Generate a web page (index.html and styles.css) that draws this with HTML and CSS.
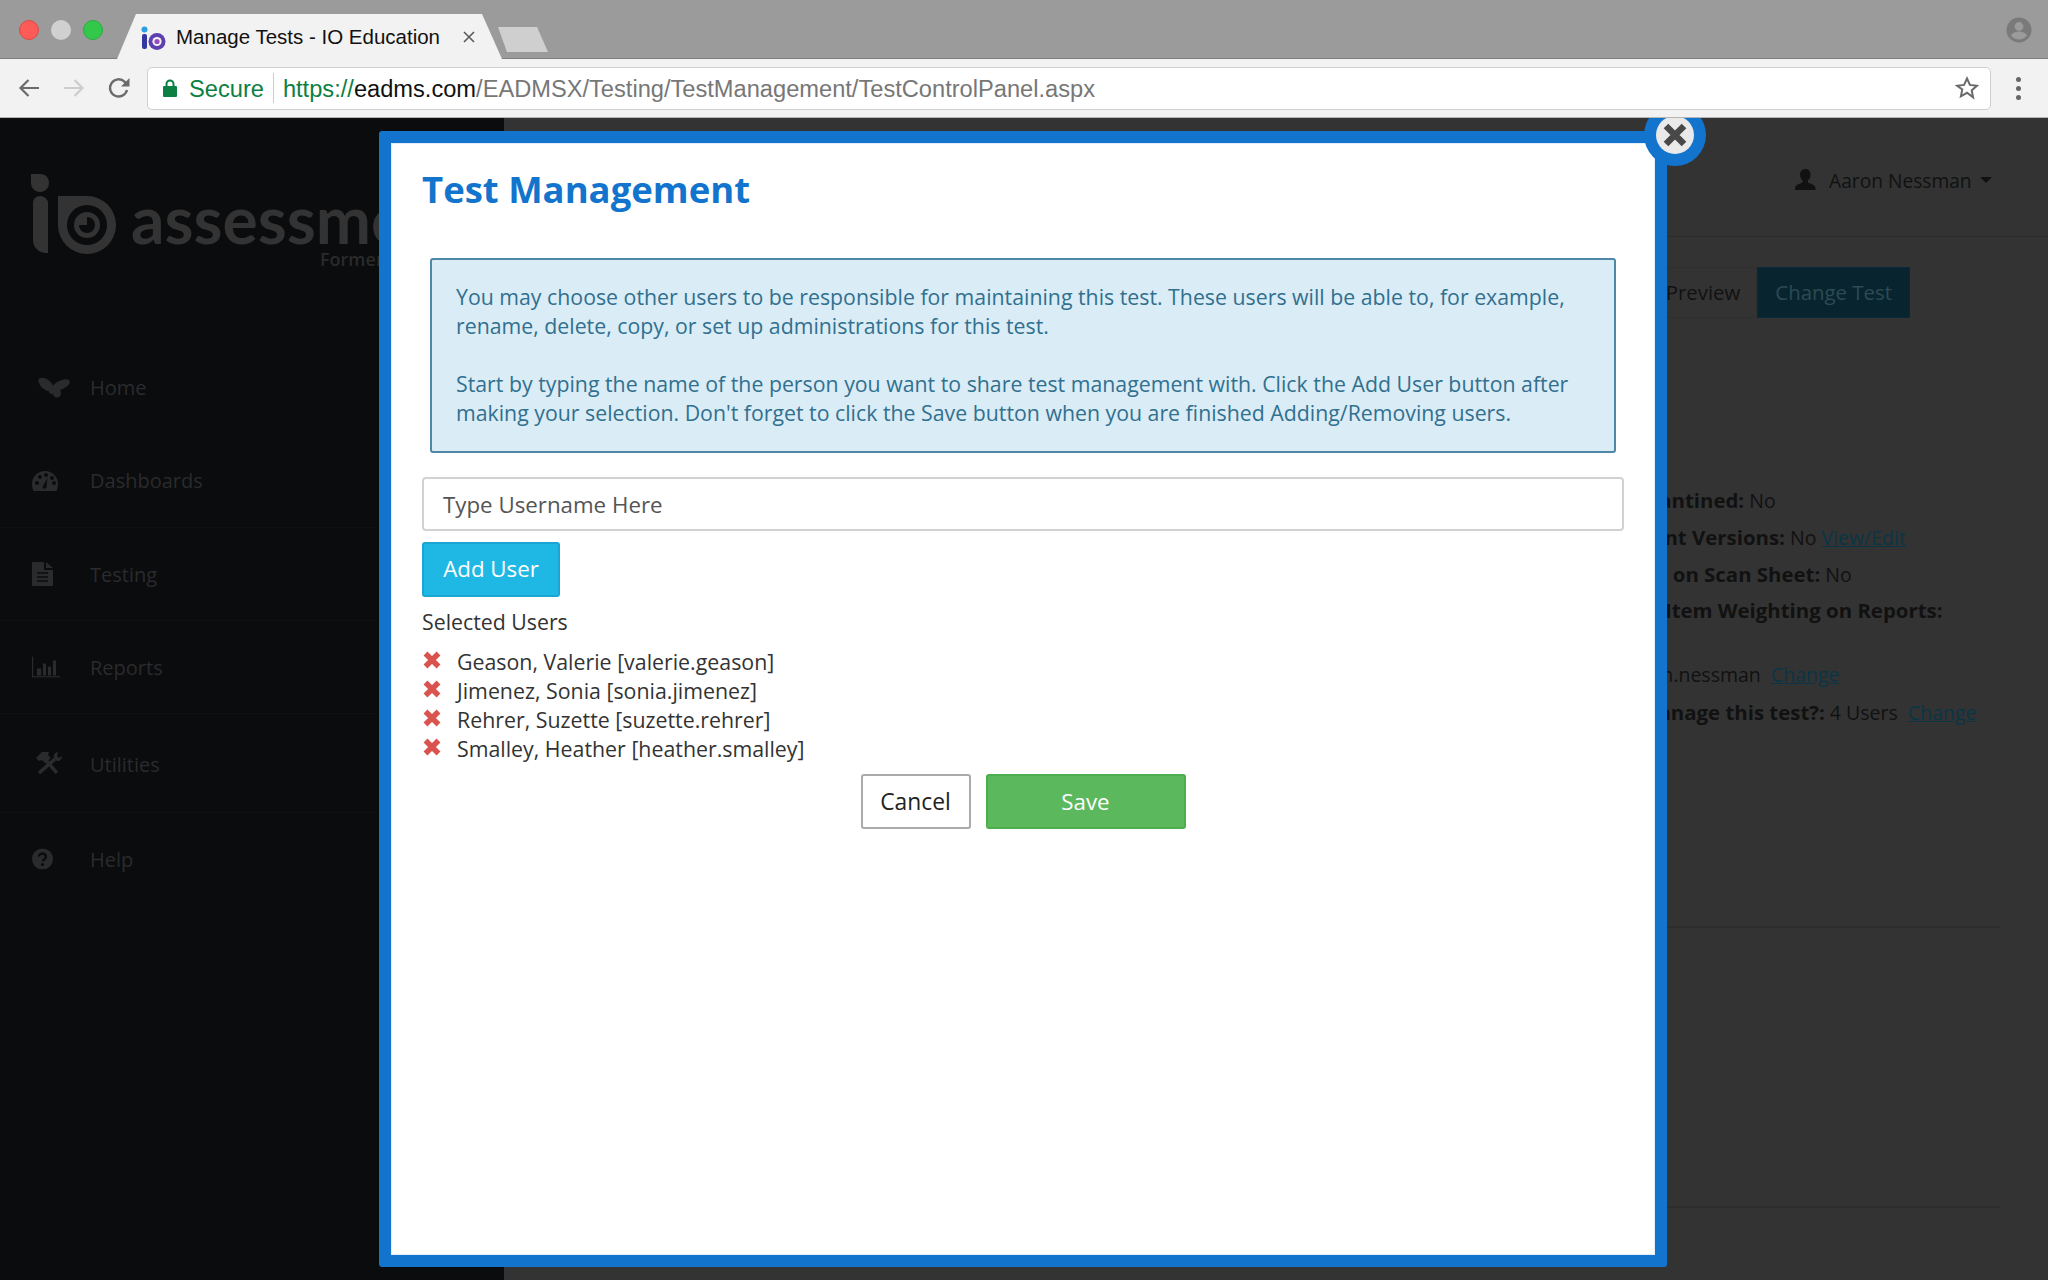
FILE: index.html
```html
<!DOCTYPE html>
<html lang="en">
<head>
<meta charset="utf-8">
<title>Manage Tests - IO Education</title>
<link rel="stylesheet" href="styles.css">
</head>
<body>
<div class="window">
  <header class="tabstrip">
    <div class="lights">
      <span class="light light-red"></span>
      <span class="light light-grey"></span>
      <span class="light light-green"></span>
    </div>
    <div class="tab">
      <svg class="favicon" width="26" height="26" viewBox="0 0 26 26">
        <circle cx="3.5" cy="4.5" r="3" fill="#2c9fe0"/>
        <rect x="1" y="9" width="5" height="15" rx="2" fill="#33379f"/>
        <circle cx="16" cy="16.5" r="8.5" fill="#5d3fb0"/>
        <circle cx="16" cy="16.5" r="4.6" fill="#f2f2f2"/>
        <circle cx="16" cy="16.5" r="2.6" fill="#9a4bc0"/>
      </svg>
      <span class="tab-title">Manage Tests - IO Education</span>
      <svg class="tab-close" width="12" height="12" viewBox="0 0 12 12"><path d="M1 1l10 10M11 1L1 11" stroke="#5a5a5a" stroke-width="1.6"/></svg>
    </div>
    <span class="newtab"></span>
    <svg class="profile" width="26" height="26" viewBox="0 0 26 26">
      <circle cx="13" cy="13" r="12.5" fill="#7a7a7a"/>
      <circle cx="13" cy="9.5" r="4.4" fill="#9b9b9b"/>
      <path d="M5 18.5c1.5-3 5-4 8-4s6.500 1 8 4c-2 2.500-5 4-8 4s-6-1.500-8-4z" fill="#9b9b9b"/>
    </svg>
  </header>

  <nav class="toolbar">
    <svg class="tool" width="22" height="20" viewBox="0 0 22 20"><path d="M21 10H3M10.500 2L2.500 10l8 8" fill="none" stroke="#6b6b6b" stroke-width="2.200"/></svg>
    <svg class="tool" width="22" height="20" viewBox="0 0 22 20"><path d="M1 10h18M11.500 2l8 8-8 8" fill="none" stroke="#cdcdcd" stroke-width="2.200"/></svg>
    <svg class="tool tool-reload" width="24" height="24" viewBox="0 0 24 24"><path d="M20 14a8.600 8.600 0 1 1-2.300-8.200L21 9" fill="none" stroke="#6b6b6b" stroke-width="2.400"/><path d="M22.500 2v8.500H14z" fill="#6b6b6b"/></svg>
    <div class="urlbar">
      <svg class="lock" width="14" height="18" viewBox="0 0 14 18"><path d="M3.500 8V5a3.500 3.500 0 0 1 7 0v3" fill="none" stroke="#0b8043" stroke-width="2"/><rect y="7" width="14" height="11" rx="1" fill="#0b8043"/></svg>
      <span class="secure">Secure</span>
      <span class="url"><span class="url-scheme">https://</span><span class="url-host">eadms.com</span>/EADMSX/Testing/TestManagement/TestControlPanel.aspx</span>
      <svg class="star" width="24" height="24" viewBox="0 0 24 24"><path d="M12 2.500l2.900 6.400 7 .8-5.200 4.700 1.400 6.900L12 16.800l-6.100 3.500 1.400-6.900L2.100 9.700l7-.8z" fill="none" stroke="#6b6b6b" stroke-width="2"/></svg>
    </div>
    <span class="menu-dots"><i></i><i></i><i></i></span>
  </nav>

  <div class="page">
    <aside class="sidebar">
      <div class="brand">
        <svg class="brand-mark" width="90" height="84" viewBox="0 0 90 84">
          <path d="M1 2h9c6 0 9 4 9 9s-4 9-9 9-9-4-9-9z" fill="#333"/>
          <path d="M3 31c0-4 3-7 7-7s8 3 8 7v50c-8 1-15-5-15-13z" fill="#333"/>
          <path d="M28 24h29a29 29 0 1 1-29 29z" fill="#333"/>
          <circle cx="57" cy="53" r="20" fill="#0b0c0e"/>
          <circle cx="57" cy="53" r="13" fill="#333"/>
          <path d="M57 45a8 8 0 1 1-8 8h8z" fill="#0b0c0e"/>
        </svg>
        <span class="brand-name">assessment</span>
        <span class="brand-sub">Formerly</span>
      </div>
      <ul class="nav">
        <li class="nav-item">
          <svg class="nav-icon nav-icon-fly" width="32" height="20" viewBox="0 0 32 20" fill="#2a2b2c"><ellipse cx="8" cy="6.500" rx="9" ry="5" transform="rotate(40 8 6.500)"/><ellipse cx="23" cy="7" rx="9.500" ry="4.500" transform="rotate(-25 23 7)"/><ellipse cx="19" cy="15" rx="4" ry="4.500"/><ellipse cx="14" cy="13" rx="3" ry="3"/></svg>
          <span>Home</span>
        </li>
        <li class="nav-item">
          <svg class="nav-icon" width="26" height="20" viewBox="0 0 26 20"><path d="M13 0a13 13 0 0 1 13 13c0 3-1 7-2 7H2c-1 0-2-4-2-7A13 13 0 0 1 13 0z" fill="#2a2b2c"/><circle cx="5" cy="12" r="2" fill="#0b0c0e"/><circle cx="8" cy="6" r="2" fill="#0b0c0e"/><circle cx="14" cy="4" r="2" fill="#0b0c0e"/><circle cx="20" cy="7" r="2" fill="#0b0c0e"/><circle cx="22" cy="12" r="2" fill="#0b0c0e"/><path d="M15.500 7l-1 8a2 2 0 1 1-3-1z" fill="#0b0c0e"/></svg>
          <span>Dashboards</span>
        </li>
        <li class="nav-item nav-line">
          <svg class="nav-icon" width="21" height="24" viewBox="0 0 21 24"><path d="M1 0h11v8h9v15a1 1 0 0 1-1 1H1a1 1 0 0 1-1-1V1a1 1 0 0 1 1-1zm13 0l7 6h-7z" fill="#2a2b2c"/><path d="M5 11h11M5 15h11M5 19h11" stroke="#0b0c0e" stroke-width="1.600"/></svg>
          <span>Testing</span>
        </li>
        <li class="nav-item nav-line">
          <svg class="nav-icon" width="28" height="21" viewBox="0 0 28 21"><path d="M.5 0v20.500H28" fill="none" stroke="#2a2b2c" stroke-width="1.400"/><path d="M5 12h4v7H5zM11 7h3v12h-3zM16 10h3v9h-3zM21 4h3v15h-3z" fill="#2a2b2c"/></svg>
          <span>Reports</span>
        </li>
        <li class="nav-item nav-line nav-utilities">
          <svg class="nav-icon nav-icon-tools" width="26" height="22" viewBox="0 0 26 22"><path d="M8 6l13 15" stroke="#2a2b2c" stroke-width="3.600" fill="none"/><path d="M0 6l6-6h7l-1 3 3 3-6 5-3-3-3 1z" fill="#2a2b2c"/><path d="M3 21L19 7" stroke="#2a2b2c" stroke-width="3.600" fill="none"/><path d="M22 0c-3 .5-5 3-4 6l3 3c3 .5 5-2 5-5l-3 2-2-2z" fill="#2a2b2c"/></svg>
          <span>Utilities</span>
        </li>
        <li class="nav-item nav-line">
          <svg class="nav-icon" width="21" height="21" viewBox="0 0 21 21"><circle cx="10.500" cy="10.500" r="10.500" fill="#2a2b2c"/><path d="M7 8c0-2 2-3 3.500-3s3.500 1 3.500 3c0 2.500-3 2.500-3 5" fill="none" stroke="#0b0c0e" stroke-width="2.400"/><circle cx="10.500" cy="16" r="1.600" fill="#0b0c0e"/></svg>
          <span>Help</span>
        </li>
      </ul>
    </aside>

    <main class="main">
      <div class="main-head">
        <svg class="user-icon" width="21" height="21" viewBox="0 0 21 21"><path d="M10.500 0c3.500 0 5 2.500 5 5.500 0 2.500-1 4.500-2.500 6v2c2 1 7 2 7.500 5.500v2H0v-2c.5-3.500 5.500-4.500 7.500-5.500v-2C6 10 5 8 5 5.500 5 2.500 7 0 10.500 0z" fill="#111"/></svg>
        <span class="user-name">Aaron Nessman</span>
        <span class="caret"></span>
      </div>
      <div class="actions">
        <span class="btn-dim">Preview</span>
        <span class="btn-dim btn-dim-teal">Change Test</span>
      </div>
      <div class="meta">
        <p class="meta-line m1"><b>Quarantined:</b> No</p>
        <p class="meta-line m2"><b>Different Versions:</b> No <a href="#">View/Edit</a></p>
        <p class="meta-line m3"><b>Answers on Scan Sheet:</b> No</p>
        <p class="meta-line m4"><b>Use Item Weighting on Reports:</b></p>
        <p class="meta-line meta-gap m5">aaron.nessman&nbsp; <a href="#">Change</a></p>
        <p class="meta-line m6"><b>Who can manage this test?:</b> 4 Users&nbsp; <a href="#">Change</a></p>
      </div>
      <hr class="rule rule-a">
      <hr class="rule rule-b">
    </main>

    <section class="modal">
      <span class="modal-close">
        <svg width="24" height="24" viewBox="0 0 24 24"><path d="M3 3l18 18M21 3L3 21" stroke="#484848" stroke-width="6.500"/></svg>
      </span>
      <h1 class="modal-title">Test Management</h1>
      <div class="notice">
        <p>You may choose other users to be responsible for maintaining this test. These users will be able to, for example, rename, delete, copy, or set up administrations for this test.</p>
        <p>Start by typing the name of the person you want to share test management with. Click the Add User button after making your selection. Don't forget to click the Save button when you are finished Adding/Removing users.</p>
      </div>
      <div class="field">Type Username Here</div>
      <button class="btn btn-info">Add User</button>
      <div class="selected-label">Selected Users</div>
      <ul class="users">
        <li class="user"><svg class="x" width="18" height="18" viewBox="0 0 18 18"><path d="M2.500 2.500l13 13M15.500 2.500l-13 13" stroke="#d9534f" stroke-width="5.500"/></svg>Geason, Valerie [valerie.geason]</li>
        <li class="user"><svg class="x" width="18" height="18" viewBox="0 0 18 18"><path d="M2.500 2.500l13 13M15.500 2.500l-13 13" stroke="#d9534f" stroke-width="5.500"/></svg>Jimenez, Sonia [sonia.jimenez]</li>
        <li class="user"><svg class="x" width="18" height="18" viewBox="0 0 18 18"><path d="M2.500 2.500l13 13M15.500 2.500l-13 13" stroke="#d9534f" stroke-width="5.500"/></svg>Rehrer, Suzette [suzette.rehrer]</li>
        <li class="user"><svg class="x" width="18" height="18" viewBox="0 0 18 18"><path d="M2.500 2.500l13 13M15.500 2.500l-13 13" stroke="#d9534f" stroke-width="5.500"/></svg>Smalley, Heather [heather.smalley]</li>
      </ul>
      <div class="modal-actions">
        <button class="btn btn-default">Cancel</button>
        <button class="btn btn-success">Save</button>
      </div>
    </section>
  </div>
</div>
</body>
</html>
```

FILE: styles.css
```css
* { box-sizing: border-box; }
html, body { margin: 0; padding: 0; height: 100%; overflow: hidden; }
body { font-family: "Open Sans", sans-serif; font-size: 20px; color: #333; }

.window { width: 2048px; height: 1280px; display: flex; flex-direction: column; }

/* browser chrome */
.tabstrip { height: 59px; background: #9b9b9b; border-bottom: 1px solid #7f7f7f; display: flex; align-items: flex-start; position: relative; }
.lights { display: flex; gap: 12px; padding: 20px 0 0 19px; width: 117px; }
.light { width: 20px; height: 20px; border-radius: 50%; }
.light-red { background: #fc5b57; border: 1px solid #df4844; }
.light-grey { background: #d0d0d0; }
.light-green { background: #34c84a; border: 1px solid #2aac3f; }
.tab { width: 385px; height: 45px; margin-top: 14px; background: #f2f2f2; clip-path: polygon(0 100%, 19px 0, 365px 0, 385px 100%); display: flex; align-items: center; padding: 0 0 0 24px; }
.favicon { flex: none; margin-top: 3px; }
.tab-title { font-family: "Liberation Sans", Arial, sans-serif; font-size: 20.500px; color: #111; margin-left: 9px; white-space: nowrap; width: 287px; }
.tab-close { flex: none; }
.newtab { width: 50px; height: 25px; margin: 27px 0 0 -4px; background: #cfcfcf; clip-path: polygon(0 0, 39px 0, 50px 100%, 9px 100%); }
.profile { margin: 17px 16px 0 auto; }

.toolbar { height: 59px; background: #f2f2f2; border-bottom: 1px solid #b5b5b5; display: flex; align-items: center; padding: 0 0 0 18px; position: relative; z-index: 5; }
.tool { flex: none; margin-right: 23px; }
.tool-reload { margin-left: -1px; }
.urlbar { width: 1844px; height: 43px; margin-left: -7px; background: #fff; border: 1px solid #cfcfcf; border-radius: 5px; display: flex; align-items: center; padding: 0 11px 0 15px; font-family: "Liberation Sans", Arial, sans-serif; font-size: 23.650px; white-space: nowrap; }
.lock { flex: none; }
.secure { color: #0b8043; margin-left: 12px; padding: 2px 9px 0 0; border-right: 1px solid #ccc; line-height: 28px; }
.url { color: #777; margin-left: 9px; padding-top: 2px; }
.url-scheme { color: #0b8043; }
.url-host { color: #111; }
.star { margin-left: auto; }
.menu-dots { display: flex; flex-direction: column; gap: 4px; margin-left: 25px; }
.menu-dots i { width: 5px; height: 5px; border-radius: 50%; background: #666; display: block; }

/* dimmed page */
.page { flex: 1; display: flex; position: relative; overflow: hidden; background: #333; }
.sidebar { width: 504px; flex: none; background: #0b0c0e; }
.brand { width: 379px; height: 223px; display: flex; position: relative; overflow: hidden; padding: 54px 0 0 30px; }
.brand-mark { flex: none; }
.brand-name { font-family: Lato, sans-serif; font-weight: 700; font-size: 66px; color: #333; line-height: 60px; height: 60px; margin: 17px 0 0 11px; }
.brand-sub { position: absolute; left: 320px; top: 131px; font-size: 18px; line-height: 20px; color: #2a2a2a; font-weight: 600; }
.nav { list-style: none; margin: 0; padding: 0; }
.nav-item { height: 93px; display: flex; align-items: center; color: #2a2b2c; position: relative; padding-left: 90px; }
.nav-line { border-top: 1px solid #0f1012; }
.nav-utilities { height: 99px; padding-top: 3px; }
.nav-icon { position: absolute; left: 32px; top: 50%; transform: translateY(-50%); }
.nav-icon-tools { left: 36px; }
.nav-icon-fly { left: 38px; }

.main { flex: 1; position: relative; min-width: 0; }
.main-head { height: 119px; border-bottom: 1px solid #2c2c2c; display: flex; align-items: center; padding-left: 1291px; padding-top: 6px; color: #111; font-size: 19.200px; }
.user-icon { margin-top: -2px; }
.user-name { margin-left: 13px; }
.caret { width: 0; height: 0; border-left: 6px solid transparent; border-right: 6px solid transparent; border-top: 6px solid #111; margin-left: 8px; }
.actions { display: flex; justify-content: flex-end; padding: 30px 138px 0 0; font-size: 20.400px; }
.btn-dim { height: 51px; line-height: 49px; padding: 0 16px 0 18px; border: 1px solid #2f2f2f; color: #111; }
.btn-dim-teal { background: #08252f; border-color: #062a3a; color: #2e4a52; padding: 0 17px; }
.btn-dim:first-child { padding-left: 120px; }
.meta { padding-top: 164px; font-size: 19.500px; color: #111; }
.meta-line { margin: 0; height: 36.800px; line-height: 36.800px; white-space: nowrap; }
.meta-line b { font-size: 20.400px; }
.meta-line a { color: #0b3545; text-decoration: underline; }
.meta-gap { margin-top: 28px; }
.m1 { margin-left: 1104px; }
.m2 { margin-left: 1090px; }
.m3 { margin-left: 1077px; }
.m4 { margin-left: 1118px; }
.m5 { margin-left: 1116px; }
.m6 { margin-left: 1042px; }
.rule { position: absolute; left: 0; width: 1496px; margin: 0; border: 0; border-top: 2px solid #2d2d2d; }
.rule-a { top: 808px; }
.rule-b { top: 1088px; }

/* modal */
.modal { position: absolute; left: 379px; top: 13px; width: 1288px; height: 1136px; background: #fff; border: 12.500px solid #1274cc; border-radius: 3px; padding: 0 31px; z-index: 3; box-shadow: inset 0 0 0 1px #e3eef9; }
.modal-close { position: absolute; left: 1253px; top: -39px; width: 62px; height: 62px; border-radius: 50%; background: #1274cc; display: flex; align-items: center; justify-content: center; }
.modal-close::before { content: ""; position: absolute; left: 12px; top: 12px; width: 38px; height: 38px; border-radius: 50%; background: #e9e9e9; }
.modal-close svg { position: relative; }
.modal-title { margin: 22px 0 0; font-size: 36.500px; line-height: 48px; font-weight: 700; color: #1274cc; }
.notice { margin: 45px 8px 0; height: 195px; background: #daecf6; border: 2px solid #4f87a6; border-radius: 3px; padding: 22px 24px; color: #31708f; font-size: 21.300px; line-height: 29px; }
.notice p { margin: 0 0 29px; }
.field { height: 54px; margin-top: 24px; border: 2px solid #d2d2d2; border-radius: 4px; padding: 0 19px; line-height: 52px; color: #555; font-size: 22.300px; }
.btn { font-family: inherit; font-size: 22.300px; height: 55px; border-radius: 3px; border: 2px solid transparent; padding: 0; display: block; }
.btn-info { width: 138px; margin-top: 11px; padding-bottom: 2px; background: #1fb8e4; border-color: #1aa6d4; color: #fff; }
.selected-label { margin-top: 0; line-height: 50px; font-size: 21.300px; }
.users { list-style: none; margin: 0; padding: 0; font-size: 21.350px; }
.user { height: 29px; line-height: 29px; display: flex; align-items: center; }
.x { flex: none; margin: -4px 16px 0 1px; }
.modal-actions { display: flex; justify-content: center; gap: 15px; margin-top: 11px; }
.btn-default { width: 110px; background: #fff; border-color: #aaa; color: #222; font-size: 22.800px; }
.btn-success { width: 200px; background: #5cb85c; border-color: #4cae4c; color: #fff; }
```
